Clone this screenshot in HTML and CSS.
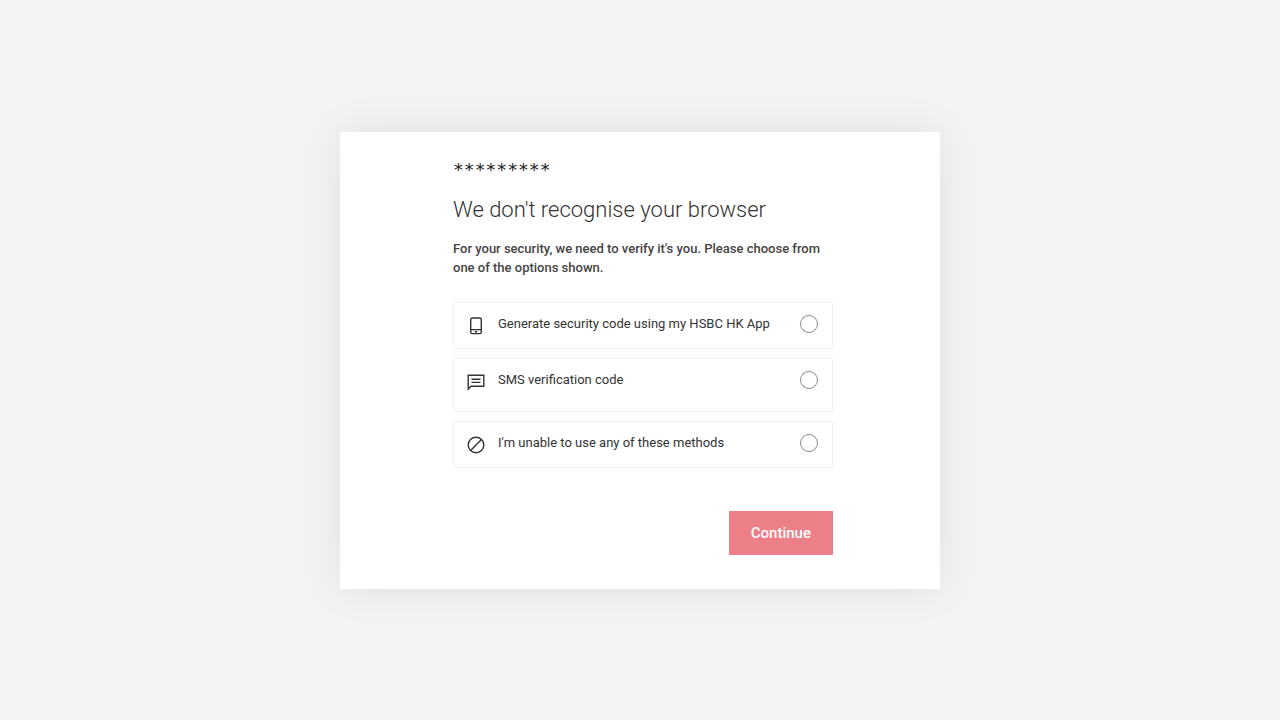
FILE: index.html
```html
<!DOCTYPE html>
<html lang="en">
<head>
  <meta charset="UTF-8" />
  <meta name="viewport" content="width=device-width, initial-scale=1.0" />
  <title>Verify it's you</title>
  <link rel="stylesheet" href="styles.css">
</head>
<body>
  <main class="card">
    <p class="username">*********</p>
    <h1>We don't recognise your browser</h1>
    <form>
      <p class="intro" id="intro">For your security, we need to verify it's you. Please choose from one of the options shown.</p>
      <div class="options" role="radiogroup" aria-labelledby="intro">
        <label class="option">
          <svg class="icon" viewBox="0 0 18 18" aria-hidden="true">
            <rect x="3.7" y="1" width="10.6" height="15.6" rx="1.6" />
            <path d="M4 12.6h10M7.8 14.7h2.4" />
          </svg>
          <span>Generate security code using my HSBC HK App</span>
          <input type="radio" name="method" value="app">
        </label>
        <label class="option option-sms">
          <svg class="icon" viewBox="0 0 18 18" aria-hidden="true">
            <path d="M1.2 16V2.2h15.6v11H4L1.2 16zM4.5 6.2h9M4.5 9.4h9" />
          </svg>
          <span>SMS verification code</span>
          <input type="radio" name="method" value="sms">
        </label>
        <label class="option">
          <svg class="icon" viewBox="0 0 18 18" aria-hidden="true">
            <circle cx="9" cy="9" r="7.8" />
            <path d="M3.6 14.4L14.4 3.6" />
          </svg>
          <span>I'm unable to use any of these methods</span>
          <input type="radio" name="method" value="none">
        </label>
      </div>
      <div class="actions">
        <button type="button">Continue</button>
      </div>
    </form>
  </main>
</body>
</html>
```
FILE: styles.css
```css
* { box-sizing: border-box; }
body { margin: 0; padding: 132px 16px; background-color: #f3f3f3; color: #333; font-family: Roboto, Arial, sans-serif; font-size: 13px; }
h1 { margin: 0 0 15px; font-size: 22px; font-weight: 300; line-height: 28px; }
.card { max-width: 600px; margin: 0 auto; padding: 28px 107px 34px 113px; background-color: #fff; box-shadow: 0 0 40px rgba(0, 0, 0, 0.08); }
.username { margin: 0 0 16px; color: #222; font-family: "DejaVu Sans Mono", monospace; font-size: 18px; line-height: 20px; }
.intro { margin: 0 0 25px; color: #444; font-weight: 500; line-height: 19px; }
.options { display: flex; flex-direction: column; gap: 9px; }
.option { display: flex; align-items: flex-start; padding: 12px 14px 13px 13px; border: 1px solid #f2f2f2; line-height: 18px; cursor: pointer; }
.option-sms { padding-bottom: 20px; }
.option span { flex: 1; }
.icon { width: 18px; height: 18px; margin: 2px 13px 0 0; fill: none; stroke: #333; stroke-width: 1.4; }
.option input { appearance: none; width: 18px; height: 18px; margin: 0; border: 1px solid #8a8a8a; border-radius: 50%; background-color: #fff; }
.option input:checked { border: 5px solid #333; }
.actions { display: flex; justify-content: flex-end; margin-top: 43px; }
button { padding: 12px 22px; border: none; background-color: #ed7f89; color: #fff; font-family: inherit; font-size: 15px; font-weight: 500; line-height: 20px; cursor: pointer; }
button:hover { background-color: #db0011; }
```
